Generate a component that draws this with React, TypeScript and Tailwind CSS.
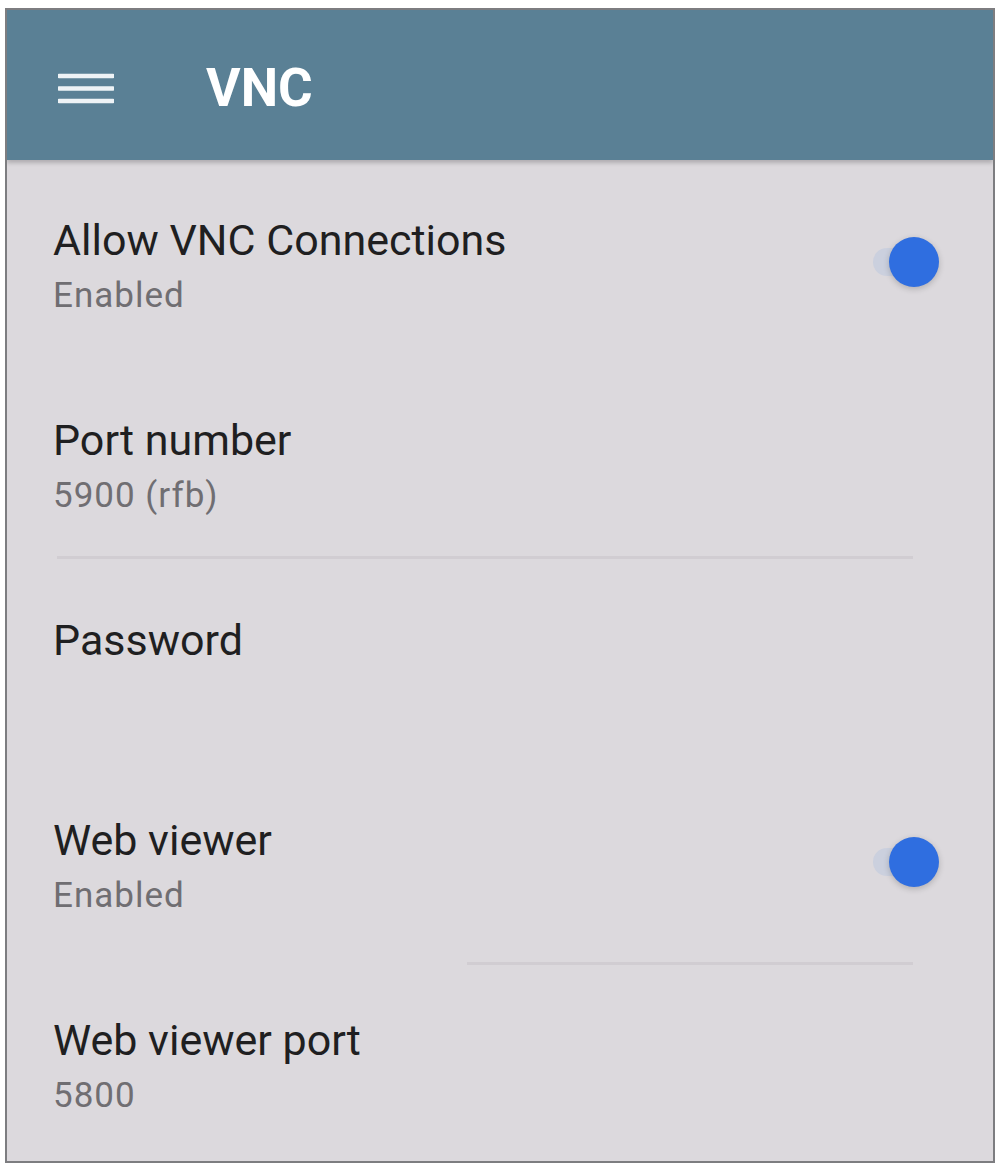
// ─── Settings rows ────────────────────────────────────────────────────────────

type Row = { title: string; summary?: string; toggle?: boolean; divider?: "full" | "half" };

const rows: Row[] = [
  { title: "Allow VNC Connections", summary: "Enabled", toggle: true },
  { title: "Port number", summary: "5900 (rfb)", divider: "full" },
  { title: "Password" },
  { title: "Web viewer", summary: "Enabled", toggle: true, divider: "half" },
  { title: "Web viewer port", summary: "5800" },
];

function Toggle() {
  return (
    <div className="relative w-[70px] h-[52px] flex items-center">
      <div className="absolute left-0 right-[10px] h-[28px] rounded-full bg-[#cbd0de]" />
      <div className="absolute right-[4px] w-[50px] h-[50px] rounded-full bg-[#2f6ee0] shadow-[0_2px_6px_rgba(0,0,0,0.2)]" />
    </div>
  );
}

export default function App() {
  return (
    <div className="w-[1001px] h-[1167px] bg-white pt-[8px] pl-[5px] pr-[6px] pb-[4px] font-['Roboto',sans-serif]">
      <div className="h-full flex flex-col border-2 border-[#7d7d80] bg-[#dcd9dd] overflow-hidden">

        {/* Toolbar */}
        <div className="h-[150px] shrink-0 bg-[#5a8095] flex items-center pl-[51px] pt-[6px] gap-[92px] shadow-[0_3px_4px_rgba(0,0,0,0.2)]">
          <svg width="56" height="32" viewBox="0 0 56 32" className="text-[#eef3f6]">
            <path d="M1 4h54M1 16.5h54M1 29h54" stroke="currentColor" strokeWidth="4.5" strokeLinecap="round" />
          </svg>
          <span className="text-[53px] leading-none font-bold text-white">VNC</span>
        </div>

        {/* Preferences */}
        <div className="flex flex-col pt-[23px]">
          {rows.map((row) => (
            <div key={row.title} className="relative h-[200px] flex items-start pl-[46px] pr-[50px] pt-[32px]">
              <div className="flex-1 flex flex-col">
                <span className="text-[43px] leading-[50px] text-[#1f1f21]">{row.title}</span>
                {row.summary && (
                  <span className="text-[35px] leading-[40px] tracking-[1px] text-[#706e72] mt-[11px]">{row.summary}</span>
                )}
              </div>
              {row.toggle && (
                <div className="mt-[21px]">
                  <Toggle />
                </div>
              )}
              {row.divider === "full" && (
                <div className="absolute bottom-[24px] left-[50px] right-[80px] h-[3px] bg-[#d1cdd2]" />
              )}
              {row.divider === "half" && (
                <div className="absolute bottom-[18px] left-[460px] right-[80px] h-[3px] bg-[#d1cdd2]" />
              )}
            </div>
          ))}
        </div>
      </div>
    </div>
  );
}
